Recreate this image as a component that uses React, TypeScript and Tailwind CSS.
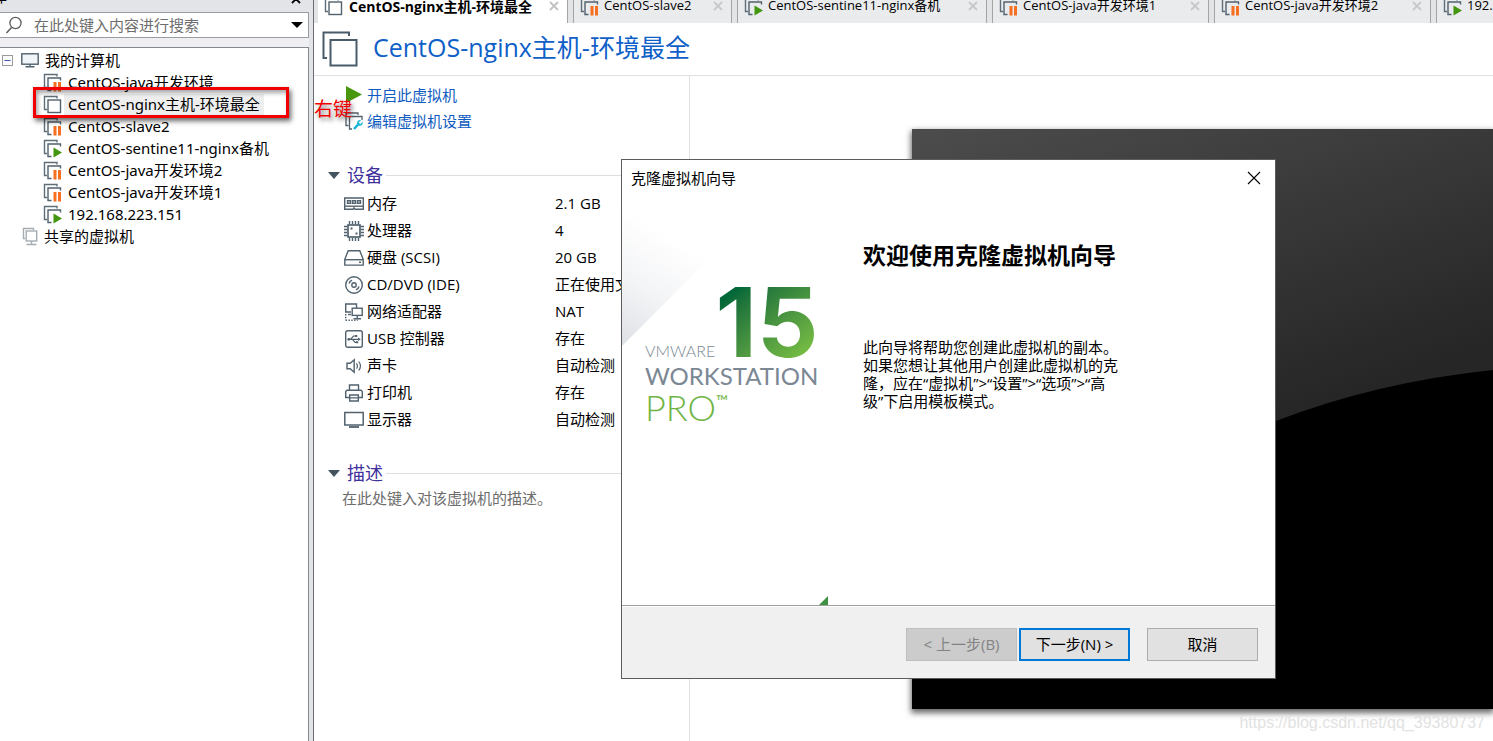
import type { ReactNode } from "react";

type VmState = "off" | "suspended" | "running";

const UI_FONT = "font-['Open_Sans','Noto_Sans_CJK_SC',sans-serif]";

const machines: { name: string; state: VmState; selected?: boolean }[] = [
  { name: "CentOS-java开发环境", state: "suspended" },
  { name: "CentOS-nginx主机-环境最全", state: "off", selected: true },
  { name: "CentOS-slave2", state: "suspended" },
  { name: "CentOS-sentine11-nginx备机", state: "running" },
  { name: "CentOS-java开发环境2", state: "suspended" },
  { name: "CentOS-java开发环境1", state: "suspended" },
  { name: "192.168.223.151", state: "running" },
];

const tabs: { name: string; state: VmState; width: string }[] = [
  { name: "CentOS-slave2", state: "suspended", width: "w-[159px]" },
  { name: "CentOS-sentine11-nginx备机", state: "running", width: "w-[250px]" },
  { name: "CentOS-java开发环境1", state: "suspended", width: "w-[217px]" },
  { name: "CentOS-java开发环境2", state: "suspended", width: "w-[217px]" },
  { name: "192.168.223.151", state: "running", width: "w-[200px]" },
];

function VmIcon({ state }: { state: VmState }) {
  return (
    <svg width="19" height="19" viewBox="0 0 19 19" fill="none" className="shrink-0" aria-hidden>
      <path d="M4 14.5H1.5V1.5H14V3.5" stroke="#5f6f7a" strokeWidth="1.4" />
      {state === "off" ? (
        <rect x="5" y="5" width="12.5" height="12.5" fill="#fff" stroke="#52626e" strokeWidth="1.4" />
      ) : (
        <path d="M8.5 17.5H5V5H17.5V7.5" stroke="#52626e" strokeWidth="1.4" />
      )}
      {state === "suspended" && <path d="M10.5 9h3v9.5h-3zM15 9h3v9.5h-3z" fill="#f76f20" />}
      {state === "running" && <path d="M10.5 8.5v10l8.5-5z" fill="#43960f" />}
    </svg>
  );
}

function LineIcon({ children }: { children: ReactNode }) {
  return (
    <svg
      width="20"
      height="20"
      viewBox="0 0 20 20"
      fill="none"
      stroke="#52626e"
      strokeWidth="1.4"
      className="shrink-0"
      aria-hidden
    >
      {children}
    </svg>
  );
}

const devices: { name: string; value: string; icon: ReactNode }[] = [
  {
    name: "内存",
    value: "2.1 GB",
    icon: (
      <>
        <path d="M.7 4h18.6v11.3H11l-1-1.5-1 1.5H.7z" />
        <path d="M3.5 6.7h3v2.6h-3zM8.5 6.7h3v2.6h-3zM13.5 6.7h3v2.6h-3z" />
        <path d="M1 12.2h18" />
      </>
    ),
  },
  {
    name: "处理器",
    value: "4",
    icon: (
      <>
        <rect x="4" y="4" width="12" height="12" strokeWidth="1.7" />
        <path d="M5.5 0v3M8.5 0v3M11.5 0v3M14.5 0v3M5.5 17v3M8.5 17v3M11.5 17v3M14.5 17v3M0 5.5h3M0 8.5h3M0 11.5h3M0 14.5h3M17 5.5h3M17 8.5h3M17 11.5h3M17 14.5h3" />
        <path d="M6.5 7.5h2M11.5 12.5h2" strokeWidth="2" />
      </>
    ),
  },
  {
    name: "硬盘 (SCSI)",
    value: "20 GB",
    icon: (
      <>
        <path d="M4.2 2.8h11.6l3.4 8.5v5.8H.8v-5.8z" />
        <path d="M1 11.7h18" />
        <path d="M15 14.3h2" strokeWidth="1.6" />
      </>
    ),
  },
  {
    name: "CD/DVD (IDE)",
    value: "正在使用文件",
    icon: (
      <>
        <circle cx="10" cy="10" r="8.3" />
        <circle cx="10" cy="10" r="2.2" />
        <path d="M5 8.5A5.3 5.3 0 0 1 8 5.1M15 11.5a5.3 5.3 0 0 1-3 3.4" />
      </>
    ),
  },
  {
    name: "网络适配器",
    value: "NAT",
    icon: (
      <>
        <path d="M7 10H1.7V2h10.8v4" />
        <path d="M4 12.5h3" />
        <rect x="8.2" y="6.2" width="10" height="7.2" />
        <path d="M13.2 13.5v3M9.5 16.7h7.5" />
        <path d="M1.7 12v6.3M1.7 18.3h12" strokeDasharray="1.4 1.4" />
      </>
    ),
  },
  {
    name: "USB 控制器",
    value: "存在",
    icon: (
      <>
        <rect x="1.7" y="1.7" width="16.6" height="16.6" rx="2" />
        <path d="M4 10.3h11M6.5 10.3l3-3.3h2.2M8.5 10.3l2.6 3h1.7" strokeWidth="1.2" />
        <path d="M14 8.6l2.8 1.7L14 12zM11 6h2.2v2H11zM12 12.3h2.2v2H12z" fill="#52626e" stroke="none" />
        <circle cx="4.8" cy="10.3" r="1.4" fill="#52626e" stroke="none" />
      </>
    ),
  },
  {
    name: "声卡",
    value: "自动检测",
    icon: (
      <>
        <path d="M3 7.3h3.2l4-3.6v12.6l-4-3.6H3z" />
        <path d="M12.4 7.3c1.3 1.6 1.3 3.8 0 5.4M14.7 5.5c2.1 2.7 2.1 6.3 0 9" strokeWidth="1.2" />
      </>
    ),
  },
  {
    name: "打印机",
    value: "存在",
    icon: (
      <>
        <path d="M5.5 7V2h9v5" />
        <path d="M5.5 14.5H1.7v-6L3 7.2h14l1.3 1.3v6h-3.8" />
        <path d="M5.7 12h8.6v6H5.7zM5 14.9h10" />
      </>
    ),
  },
  {
    name: "显示器",
    value: "自动检测",
    icon: (
      <>
        <rect x=".8" y="2.5" width="18.4" height="12.5" strokeWidth="1.5" />
        <path d="M5 17h10" strokeWidth="1.8" />
      </>
    ),
  },
];

function CloseGlyph() {
  return (
    <svg width="10" height="10" viewBox="0 0 10 10" aria-hidden>
      <path d="M1 1l8 8M9 1l-8 8" stroke="currentColor" strokeWidth="1.8" />
    </svg>
  );
}

function Sidebar() {
  return (
    <aside className="flex w-[314px] shrink-0 border-r border-[#6e6e72] bg-[#e3e4e8]">
      <div className="flex w-[309px] flex-col">
        <div className="flex h-3 items-end justify-between overflow-hidden pr-2 text-[15px] leading-4">
          <span className="-ml-2 pb-2">库</span>
          <button type="button" aria-label="关闭" className="pb-2">
            <CloseGlyph />
          </button>
        </div>
        <div className="flex h-[26px] items-center border border-l-0 border-[#9b9ca3] bg-white">
          <svg width="28" height="20" viewBox="0 0 28 20" fill="none" aria-hidden>
            <circle cx="15.5" cy="8" r="5.6" stroke="#5d5d5d" strokeWidth="1.3" />
            <path d="M11.5 12.5L6.5 18" stroke="#5d5d5d" strokeWidth="1.5" />
          </svg>
          <input
            type="text"
            aria-label="搜索"
            placeholder="在此处键入内容进行搜索"
            className="ml-1.5 min-w-0 flex-1 text-[15px] outline-none placeholder:text-[#6d6d6d]"
          />
          <button type="button" aria-label="搜索选项" className="mr-[5px]">
            <svg width="12" height="6" viewBox="0 0 12 6" aria-hidden>
              <path d="M0 0h12L6 6z" />
            </svg>
          </button>
        </div>
        <div className="h-[9px] bg-[#efeff1]" />
        <nav className="flex-1 border-t border-r border-[#828790] bg-white pt-px font-['Noto_Sans','Noto_Sans_CJK_SC',sans-serif] text-[15px]">
          <div className="flex h-[22px] items-center pl-0.5">
            <svg width="11" height="11" viewBox="0 0 11 11" aria-hidden>
              <rect x=".5" y=".5" width="10" height="10" fill="#fafafa" stroke="#9a9a9a" />
              <path d="M2.5 5.5h6" stroke="#3d54a8" />
            </svg>
            <svg width="18" height="16" viewBox="0 0 18 16" fill="none" className="mr-1.5 ml-2" aria-hidden>
              <rect x=".8" y="1.8" width="16.4" height="10.4" fill="#f1f5f8" stroke="#52626e" strokeWidth="1.4" />
              <path d="M9 12v2.5M4.5 14.8h9" stroke="#52626e" strokeWidth="1.4" />
            </svg>
            我的计算机
          </div>
          <ul>
            {machines.map((vm) => (
              <li key={vm.name} className="relative flex h-[22px] items-center gap-0.5 pl-[43px]">
                <VmIcon state={vm.state} />
                <a
                  href="#"
                  className={`px-1 leading-[21px] whitespace-nowrap ${vm.selected ? "bg-[#eeeeee]" : ""}`}
                >
                  {vm.name}
                </a>
                {vm.selected && (
                  <span className="pointer-events-none absolute -top-1.5 left-[33px] z-10 h-[31px] w-[256px] border-[3px] border-[#f20000] shadow-[2px_3px_5px_rgba(0,0,0,0.6),inset_2px_3px_4px_rgba(0,0,0,0.35)]" />
                )}
              </li>
            ))}
          </ul>
          <div className="flex h-[22px] items-center gap-1.5 pl-[22px]">
            <svg width="16" height="19" viewBox="0 0 16 19" fill="none" stroke="#a5adb3" strokeWidth="1.4" aria-hidden>
              <path d="M3 11.5H1.5V1.5H11.5V3" />
              <rect x="4.2" y="4" width="10.5" height="10" />
              <path d="M9.5 14v3M4.5 17.5h10" />
            </svg>
            共享的虚拟机
          </div>
        </nav>
      </div>
    </aside>
  );
}

function TabBar() {
  return (
    <div className="flex h-[23px] items-end overflow-hidden bg-[#e3e4e6] pl-1">
      <div className="flex h-[34px] w-[250px] shrink-0 items-center border-r border-[#a4a4a4] bg-white pr-2 pl-1.5 text-[14px]">
        <VmIcon state="off" />
        <button type="button" className="ml-1.5 flex-1 text-left font-bold whitespace-nowrap">
          CentOS-nginx主机-环境最全
        </button>
        <button type="button" aria-label="关闭标签" className="text-[#c2c2c2]">
          <CloseGlyph />
        </button>
      </div>
      {tabs.map((tab) => (
        <div
          key={tab.name}
          className={`ml-[5px] flex h-[34px] shrink-0 items-center border-x border-[#a4a4a4] bg-[#eaebed] pr-2 pl-1.5 text-[13px] ${tab.width}`}
        >
          <VmIcon state={tab.state} />
          <button type="button" className="ml-[5px] flex-1 text-left whitespace-nowrap">
            {tab.name}
          </button>
          <button type="button" aria-label="关闭标签" className="text-[#c8c8c8]">
            <CloseGlyph />
          </button>
        </div>
      ))}
    </div>
  );
}

function SectionTitle({ children }: { children: ReactNode }) {
  return (
    <div className="flex h-7 items-center pl-3.5">
      <svg width="12" height="7" viewBox="0 0 12 7" aria-hidden>
        <path d="M0 0h12L6 7z" fill="#44545f" />
      </svg>
      <h2 className="mr-[3px] ml-[7px] text-[18px] text-[#40309c]">{children}</h2>
      <span className="h-px flex-1 bg-[#dedede]" />
    </div>
  );
}

function Details() {
  return (
    <section className="relative w-[376px] shrink-0 border-r border-[#e0e0e0] pt-1.5 text-[15px]">
      <a href="#" className="flex h-[26px] items-center gap-1 pl-[31px] text-[#0f5cc0]">
        <svg width="18" height="18" viewBox="0 0 18 18" aria-hidden>
          <path d="M1 0v17l16-8.5z" fill="#48980f" />
        </svg>
        开启此虚拟机
      </a>
      <a href="#" className="flex h-[26px] items-center gap-1 pl-[31px] text-[#0f5cc0]">
        <svg width="18" height="18" viewBox="0 0 18 18" fill="none" aria-hidden>
          <path d="M3.5 13.5H1V1h12v2" stroke="#52626e" strokeWidth="1.3" />
          <path d="M7 17H4.5V4.5H17V8" stroke="#52626e" strokeWidth="1.3" />
          <path d="M9 17l5-5.5" stroke="#18b3d6" strokeWidth="2.6" />
          <path d="M17.6 9.8l-2.2 2.4-1.7-1.6L16 8.2c-2.4-.6-4.5 1.4-3.8 3.8l1.9 1.8c2.4.4 4.2-1.6 3.5-4z" fill="#18b3d6" />
        </svg>
        编辑虚拟机设置
      </a>
      <span className="pointer-events-none absolute top-[19px] left-0 text-[19px] text-[#f20000] [text-shadow:2px_3px_4px_rgba(0,0,0,0.5)]">
        右键
      </span>

      <div className="mt-[27px]">
        <SectionTitle>设备</SectionTitle>
        <table className="mt-px w-full table-fixed">
          <tbody>
            {devices.map((device) => (
              <tr key={device.name} className="h-[27px]">
                <th scope="row" className="w-[241px] p-0 pl-[30px] text-left font-normal">
                  <span className="flex items-center gap-[3px]">
                    <LineIcon>{device.icon}</LineIcon>
                    {device.name}
                  </span>
                </th>
                <td className="p-0 whitespace-nowrap">{device.value}</td>
              </tr>
            ))}
          </tbody>
        </table>
      </div>

      <div className="mt-[26px]">
        <SectionTitle>描述</SectionTitle>
        <textarea
          aria-label="描述"
          rows={1}
          placeholder="在此处键入对该虚拟机的描述。"
          className="block w-full resize-none pl-7 leading-[22px] outline-none placeholder:text-[#6d6d6d]"
        />
      </div>
    </section>
  );
}

function Preview() {
  return (
    <section className="min-w-0 flex-1 overflow-hidden pt-[53px] pl-[222px]">
      <div className="h-[580px] shadow-[0_3px_6px_1px_rgba(0,0,0,0.6)]">
        <svg viewBox="0 0 581 580" preserveAspectRatio="xMaxYMin slice" className="block h-full w-full" aria-hidden>
          <defs>
            <linearGradient id="glass" gradientUnits="userSpaceOnUse" x1="150" y1="-40" x2="280" y2="320">
              <stop offset="0" stopColor="#4b4b4b" />
              <stop offset="1" stopColor="#262626" />
            </linearGradient>
          </defs>
          <rect width="581" height="580" fill="url(#glass)" />
          <path d="M0 580V520Q180 370 364 292Q465 253 581 241V580z" />
        </svg>
      </div>
    </section>
  );
}

function ProductArt() {
  return (
    <div className="relative w-[206px] shrink-0">
      <svg width="206" height="409" viewBox="0 0 206 409" className="block" aria-hidden>
        <defs>
          <linearGradient id="fold" gradientUnits="userSpaceOnUse" x1="0" y1="150" x2="62" y2="50">
            <stop offset="0" stopColor="#dde0e4" />
            <stop offset="0.5" stopColor="#f3f4f6" />
            <stop offset="1" stopColor="#ffffff" />
          </linearGradient>
        </defs>
        <path d="M0 0v150L150 0z" fill="url(#fold)" />
        <path d="M197 409l9-9v9z" fill="#3f9142" />
      </svg>
      <div className="absolute top-[85px] left-[23px] font-['Lato',sans-serif] whitespace-nowrap text-[#7b8894]">
        <div className="flex items-end justify-between">
          <span className="text-[16px] leading-6 font-light">VMWARE</span>
          <span className="bg-linear-to-br from-[#006838] from-15% to-[#78be43] to-90% bg-clip-text font-['Inter',sans-serif] text-[96px] leading-[82px] font-bold text-transparent">
            15
          </span>
        </div>
        <div className="text-[24px] leading-[26px]">WORKSTATION</div>
        <div className="flex items-start text-[#6fb445]">
          <span className="text-[36px] leading-9 font-light">PRO</span>
          <span className="text-[16px] leading-6">™</span>
        </div>
      </div>
    </div>
  );
}

function CloneWizard() {
  return (
    <div
      role="dialog"
      aria-labelledby="wizard-title"
      className="absolute top-[159px] left-[621px] z-20 w-[655px] border border-[#5c5c5c] bg-white text-[15px]"
    >
      <div className="flex h-9 items-center justify-between pr-3.5 pl-[9px]">
        <h2 id="wizard-title">克隆虚拟机向导</h2>
        <button type="button" aria-label="关闭">
          <svg width="14" height="14" viewBox="0 0 14 14" aria-hidden>
            <path d="M1 1l12 12M13 1L1 13" stroke="#000" strokeWidth="1.1" />
          </svg>
        </button>
      </div>
      <div className="flex h-[409px]">
        <ProductArt />
        <div className="pt-[43px] pl-[35px]">
          <h3 className="text-[23px] leading-8 font-bold whitespace-nowrap">欢迎使用克隆虚拟机向导</h3>
          <p className="mt-[67px] leading-[18px] whitespace-nowrap">
            此向导将帮助您创建此虚拟机的副本。
            <br />
            如果您想让其他用户创建此虚拟机的克
            <br />
            隆，应在“虚拟机”&gt;“设置”&gt;“选项”&gt;“高
            <br />
            级”下启用模板模式。
          </p>
        </div>
      </div>
      <div className="border-t border-[#a0a0a0]">
        <div className="mt-px flex h-[71px] items-center justify-end bg-[#f0f0f0] pt-1 pr-[17px]">
          <button
            type="button"
            disabled
            className="h-[33px] w-[111px] border border-[#bfbfbf] bg-[#cccccc] text-[#838383]"
          >
            &lt; 上一步(B)
          </button>
          <button type="button" className="ml-0.5 h-[33px] w-[111px] border-2 border-[#0078d7] bg-[#e1e1e1]">
            下一步(N) &gt;
          </button>
          <button type="button" className="ml-[17px] h-[33px] w-[111px] border border-[#adadad] bg-[#e1e1e1]">
            取消
          </button>
        </div>
      </div>
    </div>
  );
}

export default function App() {
  return (
    <div className={`relative flex min-h-screen overflow-hidden bg-white text-black ${UI_FONT}`}>
      <Sidebar />
      <main className="flex min-w-0 flex-1 flex-col">
        <TabBar />
        <header className="flex h-[53px] items-center gap-[15px] border-b border-[#e0e0e0] pl-2">
          <svg width="36" height="36" viewBox="0 0 36 36" fill="none" stroke="#4a5c69" strokeWidth="2" aria-hidden>
            <path d="M5 27H1.5V1.5H27V5" />
            <rect x="8.5" y="9" width="26" height="25.5" />
          </svg>
          <h1 className="pb-1 text-[25px] leading-8 whitespace-nowrap text-[#0f5fc8]">CentOS-nginx主机-环境最全</h1>
        </header>
        <div className="flex flex-1">
          <Details />
          <Preview />
        </div>
      </main>
      <CloneWizard />
      <p className="absolute right-2 bottom-1.5 font-['Liberation_Sans',sans-serif] text-[16px] text-[#e2e2e2]">
        https://blog.csdn.net/qq_39380737
      </p>
    </div>
  );
}
